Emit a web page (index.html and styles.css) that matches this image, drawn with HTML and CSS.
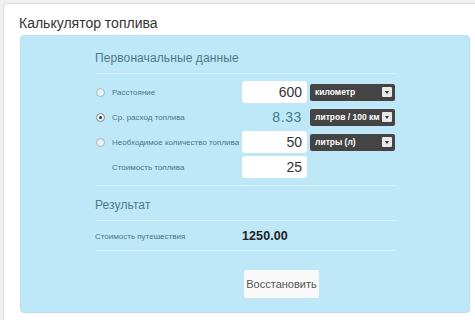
FILE: index.html
```html
<!DOCTYPE html>
<html lang="ru">
<head>
<meta charset="utf-8">
<link rel="stylesheet" href="styles.css">
</head>
<body>
<div class="card">
  <div class="title">Калькулятор топлива</div>
  <div class="panel">
    <div class="col">
      <div class="heading">Первоначальные данные</div>
      <div class="sep"></div>
      <div class="rows">
        <div class="row">
          <div class="label"><span class="radio"></span>Расстояние</div>
          <div class="input">600</div>
          <div class="select"><span>километр</span><span class="arrow"></span></div>
        </div>
        <div class="row">
          <div class="label"><span class="radio on"></span>Ср. расход топлива</div>
          <div class="input calc">8.33</div>
          <div class="select"><span>литров / 100 км</span><span class="arrow"></span></div>
        </div>
        <div class="row">
          <div class="label"><span class="radio"></span>Необходимое количество топлива</div>
          <div class="input">50</div>
          <div class="select"><span>литры (л)</span><span class="arrow"></span></div>
        </div>
        <div class="row">
          <div class="label"><span class="noradio"></span>Стоимость топлива</div>
          <div class="input">25</div>
        </div>
      </div>
      <div class="sep gap-top"></div>
      <div class="heading result-head">Результат</div>
      <div class="sep"></div>
      <div class="result-row">
        <div class="result-label">Стоимость путешествия</div>
        <div class="result-value">1250.00</div>
      </div>
      <div class="sep"></div>
      <div class="btn-row"><div class="button">Восстановить</div></div>
    </div>
  </div>
</div>
</body>
</html>
```
FILE: styles.css
```css
html, body {
  margin: 0;
  padding: 0;
  background: #f0f0f0;
  overflow: hidden;
  width: 475px;
  height: 320px;
}
body {
  font-family: "Liberation Sans", Arial, sans-serif;
}
.card {
  margin: 3px 0 0 3px;
  width: 472px;
  height: 317px;
  background: #ffffff;
  border: 1px solid #dcdcdc;
  border-right: none;
  border-bottom: none;
  border-radius: 5px 0 0 0;
  padding: 10px 0 0 16px;
  box-sizing: border-box;
}
.title {
  font-size: 14px;
  line-height: 18px;
  color: #333333;
  margin-left: -1px;
}
.panel {
  margin-top: 3px;
  width: 450px;
  height: 278px;
  box-sizing: border-box;
  background: #bee8f8;
  border-radius: 4px;
  border: 1px solid #b4e0f2;
  padding: 14px 0 0 74px;
}
.col {
  width: 300px;
}
.heading {
  font-size: 12px;
  line-height: 16px;
  color: #4f7888;
  letter-spacing: 0.1px;
  margin-bottom: 7px;
}
.result-head {
  margin-top: 11px;
}
.sep {
  height: 1px;
  background: #d8f2fc;
}
.gap-top {
  margin-top: 7px;
}
.rows {
  margin-top: 7px;
  display: flex;
  flex-direction: column;
  gap: 3px;
}
.row {
  display: grid;
  grid-template-columns: 144px 65px 85px;
  column-gap: 3px;
  align-items: center;
  height: 22px;
}
.label {
  display: flex;
  align-items: center;
  font-size: 8px;
  color: #4d7482;
  white-space: nowrap;
}
.radio, .noradio {
  width: 9px;
  height: 9px;
  margin: 0 7px 0 1px;
  flex: none;
  box-sizing: border-box;
}
.radio {
  border-radius: 50%;
  border: 1px solid #a3b6bd;
  background: #e6f1f5;
  position: relative;
}
.radio.on {
  background: #eef2f3;
  border-color: #7d8c92;
}
.radio.on::after {
  content: "";
  position: absolute;
  left: 2px;
  top: 2px;
  width: 3px;
  height: 3px;
  border-radius: 50%;
  background: #2a3438;
}
.input {
  height: 22px;
  box-sizing: border-box;
  background: #ffffff;
  border-radius: 3px;
  text-align: right;
  padding-right: 5px;
  font-size: 14px;
  line-height: 22px;
  color: #333333;
}
.input.calc {
  background: transparent;
  color: #3f7b8c;
  letter-spacing: 0.6px;
}
.select {
  height: 17px;
  box-sizing: border-box;
  background: #444444;
  border-radius: 2px;
  display: flex;
  align-items: center;
  padding: 0 3px 0 5px;
  color: #ffffff;
  font-size: 8.5px;
  font-weight: bold;
  white-space: nowrap;
}
.arrow {
  margin-left: auto;
  width: 10px;
  height: 10px;
  background: #e9e9e9;
  border-radius: 1px;
  display: flex;
  align-items: center;
  justify-content: center;
}
.arrow::after {
  content: "";
  border-left: 2.5px solid transparent;
  border-right: 2.5px solid transparent;
  border-top: 3px solid #333333;
  margin-top: 1px;
}
.result-row {
  display: flex;
  align-items: center;
  height: 16px;
  margin: 7px 0 6px;
}
.result-label {
  width: 147px;
  font-size: 8px;
  color: #4d7482;
}
.result-value {
  font-size: 12.5px;
  color: #222222;
  font-weight: bold;
  letter-spacing: 0.1px;
}
.btn-row {
  padding-left: 149px;
  margin-top: 19px;
}
.button {
  display: inline-block;
  width: 75px;
  height: 28px;
  box-sizing: border-box;
  background: #f9f9f9;
  border-radius: 2px;
  font-size: 11px;
  line-height: 28px;
  text-align: center;
  color: #555555;
}
```
